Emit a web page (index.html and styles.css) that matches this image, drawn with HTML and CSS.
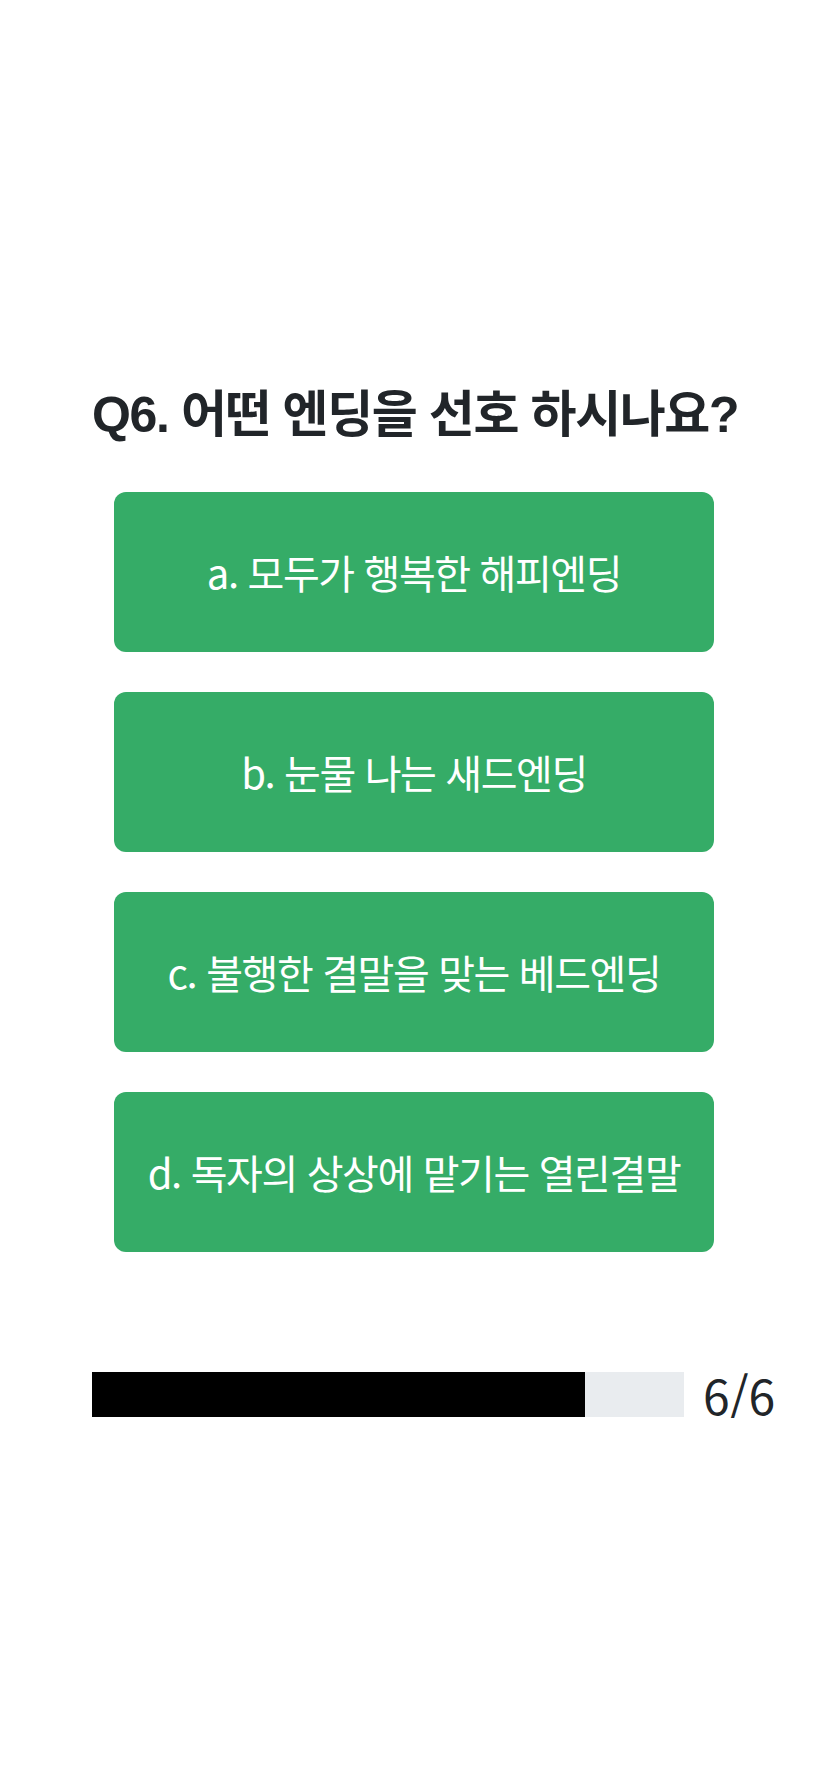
FILE: index.html
```html
<!DOCTYPE html>
<html lang="ko">
<head>
  <meta charset="UTF-8" />
  <meta name="viewport" content="width=device-width, initial-scale=1.0"/>
  <title>엔딩 테스트</title>
  <link rel="stylesheet" href="styles.css">
</head>
<body>

<div class="container">
  <h3 class="question">Q6. 어떤 엔딩을 선호 하시나요?</h3>

  <div class="answers">
    <button class="answer">a. 모두가 행복한 해피엔딩</button>
    <button class="answer">b. 눈물 나는 새드엔딩</button>
    <button class="answer">c. 불행한 결말을 맞는 베드엔딩</button>
    <button class="answer">d. 독자의 상상에 맡기는 열린결말</button>
  </div>

  <div class="progress-row">
    <div class="progress">
      <div class="progress-bar" style="width: 83.33%"></div>
    </div>
    <div class="progress-count">6/6</div>
  </div>
</div>

</body>
</html>
```

FILE: styles.css
```css
* {
  box-sizing: border-box;
}

body {
  margin: 0;
  padding: 0;
  background: #fff;
  color: #212529;
  font-family: "Noto Sans CJK KR", sans-serif;
}

.container {
  width: 644px;
  margin: 0 auto;
  padding-top: 385px;
}

.question {
  margin: 0;
  font-family: "Liberation Sans", "Noto Sans CJK KR", sans-serif;
  font-size: 50px;
  font-weight: 700;
  line-height: 60px;
  letter-spacing: -1.4px;
  text-align: center;
  white-space: nowrap;
}

.answers {
  width: 600px;
  margin: 47px auto 0;
  display: flex;
  flex-direction: column;
  gap: 40px;
}

.answer {
  height: 160px;
  border: none;
  border-radius: 12px;
  background: #35ac67;
  color: #fff;
  font-family: "Noto Sans CJK KR", sans-serif;
  font-size: 40px;
  font-weight: 400;
  letter-spacing: -1.4px;
  cursor: pointer;
}

.progress-row {
  margin-top: 118px;
  display: flex;
  align-items: center;
  gap: 19px;
}

.progress {
  flex: 0 0 592px;
  height: 45px;
  background: #e9ecef;
  display: flex;
}

.progress-bar {
  background: #000;
}

.progress-count {
  font-size: 48px;
  line-height: 1;
  white-space: nowrap;
}
```
